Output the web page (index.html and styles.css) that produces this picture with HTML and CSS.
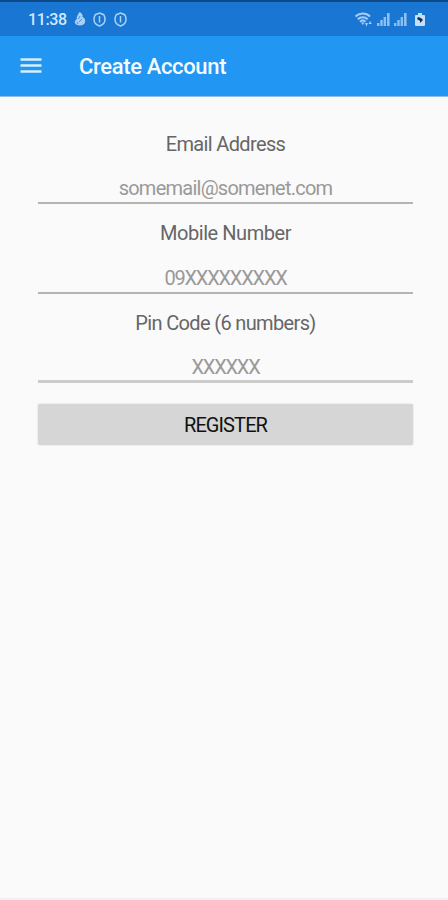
FILE: index.html
```html
<!DOCTYPE html>
<html lang="en">

<head>
    <meta charset="UTF-8">
    <meta name="viewport" content="width=device-width, initial-scale=1.0">
    <title>Create Account</title>
    <link rel="stylesheet" href="styles.css">
</head>

<body>
    <div class="status-bar">
        <span class="time">11:38</span>
        <svg class="drop" width="12" height="14" viewBox="0 0 12 14">
            <path d="M5.5 0C8 1 9 3 8.5 5C11 6 12 9 10.5 11.5C9 14 3 14 1.5 12C0 10 1 8 3 7C2 5 4 3 5.5 0Z" fill="#a9d0f7" />
            <path d="M6 4L4.5 7M8 7L5 10M3 10L4 12" stroke="#4b92dd" fill="none" />
        </svg>
        <svg class="shield" width="13" height="15" viewBox="0 0 13 15">
            <path d="M6.5 1L10.7 2.7Q12 5 12 7.5C12 10.5 9.5 13 6.5 14C3.5 13 1 10.5 1 7.5Q1 5 2.3 2.7Z" />
            <path d="M6.5 4V10.5" />
        </svg>
        <svg class="shield" width="13" height="15" viewBox="0 0 13 15">
            <path d="M6.5 1L10.7 2.7Q12 5 12 7.5C12 10.5 9.5 13 6.5 14C3.5 13 1 10.5 1 7.5Q1 5 2.3 2.7Z" />
            <path d="M6.5 4V10.5" />
        </svg>
        <div class="status-right">
            <svg width="18" height="15" viewBox="0 0 18 15">
                <g fill="none" stroke="#a3cdf7" stroke-width="2">
                    <path d="M.5 4.5C4.5 .5 11 .5 15 4.5" />
                    <path d="M2.8 7.2C5.5 4.5 10 4.5 12.7 7.2" />
                    <path d="M5 9.8C6.7 8.1 8.8 8.1 10.5 9.8" />
                </g>
                <path d="M6 10.5H9.5L7.8 13ZM10 11H13L11.5 14.5ZM13.5 12L15 9L16.8 12Z" fill="#a3cdf7" />
            </svg>
            <svg class="signal" width="13" height="13" viewBox="0 0 13 13">
                <path d="M0 10H2.4V13H0ZM3.3 7H5.7V13H3.3Z" />
                <path d="M6.6 4H9V13H6.6ZM10 0H12.6V13H10Z" />
            </svg>
            <svg class="signal" width="13" height="13" viewBox="0 0 13 13">
                <path d="M0 10H2.4V13H0ZM3.3 7H5.7V13H3.3Z" />
                <path d="M6.6 4H9V13H6.6ZM10 0H12.6V13H10Z" />
            </svg>
            <svg class="battery" width="10" height="13" viewBox="0 0 10 13">
                <path d="M3 0H7V2H9Q10 2 10 3V12Q10 13 9 13H1Q0 13 0 12V3Q0 2 1 2H3Z" fill="#c3dffa" />
                <path d="M3 4L6 5L8 7L5 10L5 8L2 6Z" fill="#17304d" />
            </svg>
        </div>
    </div>

    <div class="app-bar">
        <svg class="menu" width="22" height="16" viewBox="0 0 22 16">
            <path d="M.5 1.5H21.5M.5 7.5H21.5M.5 13.5H21.5" stroke="#d5f0ff" stroke-width="2.6" />
        </svg>
        <h1>Create Account</h1>
    </div>

    <form class="form">
        <label for="email">Email Address</label>
        <input class="email" id="email" type="email" placeholder="somemail@somenet.com">

        <label class="mobile-label" for="mobile">Mobile Number</label>
        <input class="mobile" id="mobile" type="tel" placeholder="09XXXXXXXXX">

        <label for="pin">Pin Code (6 numbers)</label>
        <input class="pin" id="pin" type="text" placeholder="XXXXXX">

        <button type="button">REGISTER</button>
    </form>
</body>

</html>
```
FILE: styles.css
```css
* {
    box-sizing: border-box;
    margin: 0;
    padding: 0;
    font-family: Roboto, "Noto Sans", sans-serif;
}

body {
    display: flex;
    flex-direction: column;
    height: 100vh;
    background: #fafafa;
    border-bottom: 2px solid #f0f0f0;
}

.status-bar {
    display: flex;
    align-items: center;
    height: 36px;
    padding: 0 23px 0 28px;
    background: #1976d2;
    border-top: 2px solid #0d4a87;
}

.time {
    width: 39px;
    margin-right: 7px;
    font-size: 16px;
    font-weight: 500;
    color: #d2e8fd;
    letter-spacing: -0.4px;
    white-space: nowrap;
}

.drop {
    margin-right: 7px;
}

.shield {
    margin-right: 8px;
    fill: none;
    stroke: #a9d0f7;
    stroke-width: 1.5;
}

.status-right {
    display: flex;
    align-items: center;
    margin-left: auto;
}

.signal {
    margin-left: 4px;
    fill: #8dc0f2;
}

.battery {
    margin-left: 8px;
}

.app-bar {
    display: flex;
    align-items: center;
    height: 61px;
    padding-left: 20px;
    background: #2196f3;
    border-bottom: 1px solid #8fbde3;
}

.menu {
    margin-right: 37px;
}

h1 {
    font-size: 22px;
    font-weight: 500;
    color: #f3fbff;
    letter-spacing: -0.35px;
}

.form {
    display: flex;
    flex-direction: column;
    padding: 32px 35px 0 38px;
}

label {
    height: 30px;
    font-size: 20px;
    line-height: 30px;
    color: #666;
    text-align: center;
    letter-spacing: -0.65px;
}

.mobile-label {
    letter-spacing: -0.45px;
}

input {
    height: 45px;
    padding-top: 15px;
    margin-bottom: 14px;
    font-size: 20px;
    color: #555;
    text-align: center;
    background: none;
    border: none;
    border-bottom: 2px solid #b4b4b4;
    border-radius: 0;
    outline: none;
    letter-spacing: -0.75px;
}

input::placeholder {
    color: #999;
    opacity: 1;
}

.mobile,
.pin {
    letter-spacing: -1.2px;
}

.mobile {
    height: 46px;
    padding-top: 16px;
}

.pin {
    padding-top: 16px;
    margin-bottom: 21px;
    border-bottom: 3px solid #ccc;
}

button {
    height: 41px;
    font-size: 20px;
    color: #111;
    background: #d6d6d6;
    border: none;
    border-radius: 2px;
    box-shadow: 0 0 2px #ccc;
    letter-spacing: -0.9px;
}
```
